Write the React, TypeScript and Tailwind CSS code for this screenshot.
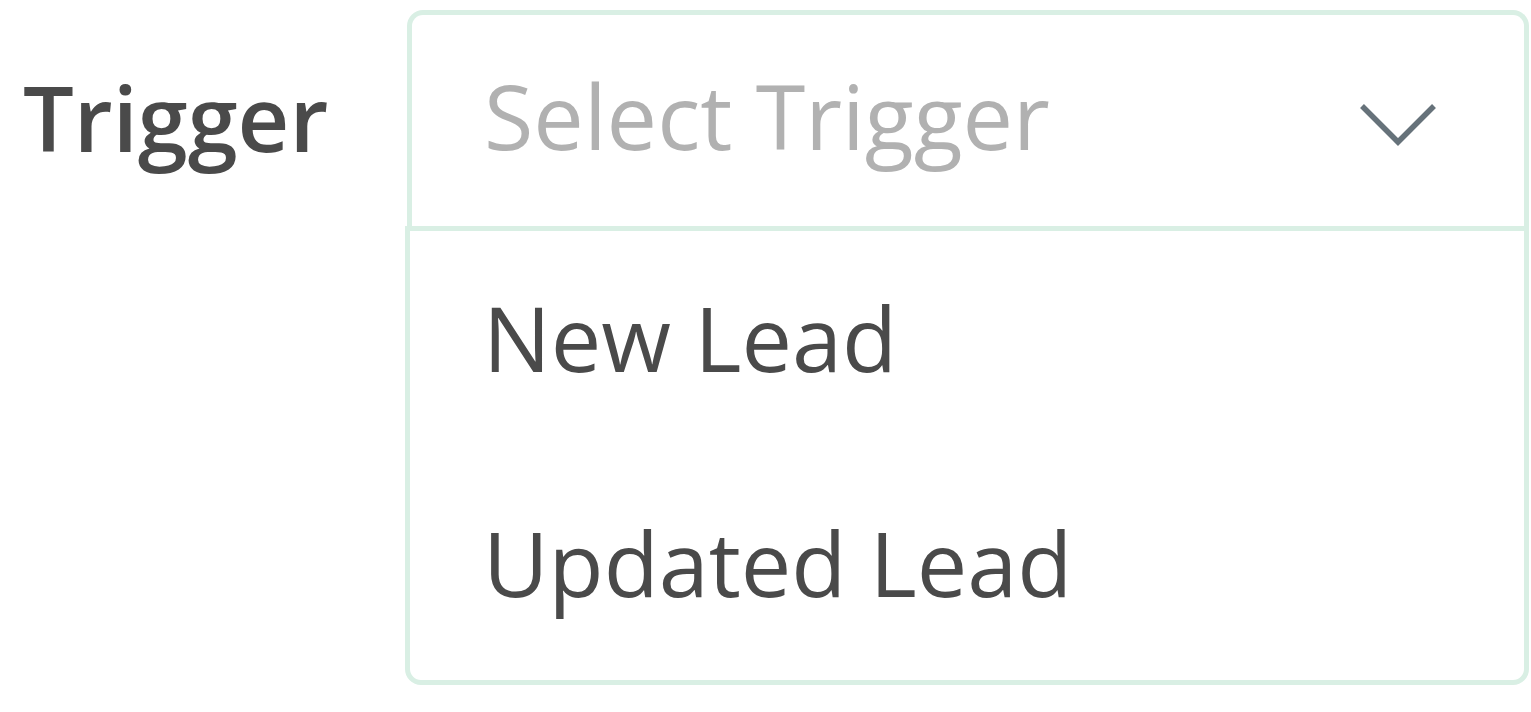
import React from "react";

export default function App() {
  return (
    <div
      className="flex w-[1531px] h-[712px] bg-white pt-[10px] pl-[23px]"
      style={{ fontFamily: '"Open Sans", sans-serif' }}
    >
      <div className="w-[384px] shrink-0">
        <div className="mt-[40px] text-[90px] leading-normal font-semibold text-[#4a4a4a]">Trigger</div>
      </div>
      <div className="flex flex-col w-[1122px]">
        <div className="h-[216px] border-[5px] border-b-0 border-[#d9efe4] rounded-t-[16px] flex items-center justify-between pl-[72px] pr-[87px] pb-[10px]">
          <span className="text-[90px] leading-normal text-[#b1b1b1]">Select Trigger</span>
          <svg className="mt-[20px]" width="78" height="46" viewBox="0 0 78 46" fill="none">
            <polyline points="3,3 39,39 75,3" stroke="#66727a" strokeWidth="5.5" />
          </svg>
        </div>
        <div className="-ml-[2px] w-[1124px] h-[459px] border-[5px] border-[#d9efe4] rounded-b-[16px] pl-[73px] pt-[39px] flex flex-col gap-[90px]">
          <div className="text-[90px] leading-normal text-[#4a4a4a]">New Lead</div>
          <div className="text-[90px] leading-normal text-[#4a4a4a]">Updated Lead</div>
        </div>
      </div>
    </div>
  );
}
